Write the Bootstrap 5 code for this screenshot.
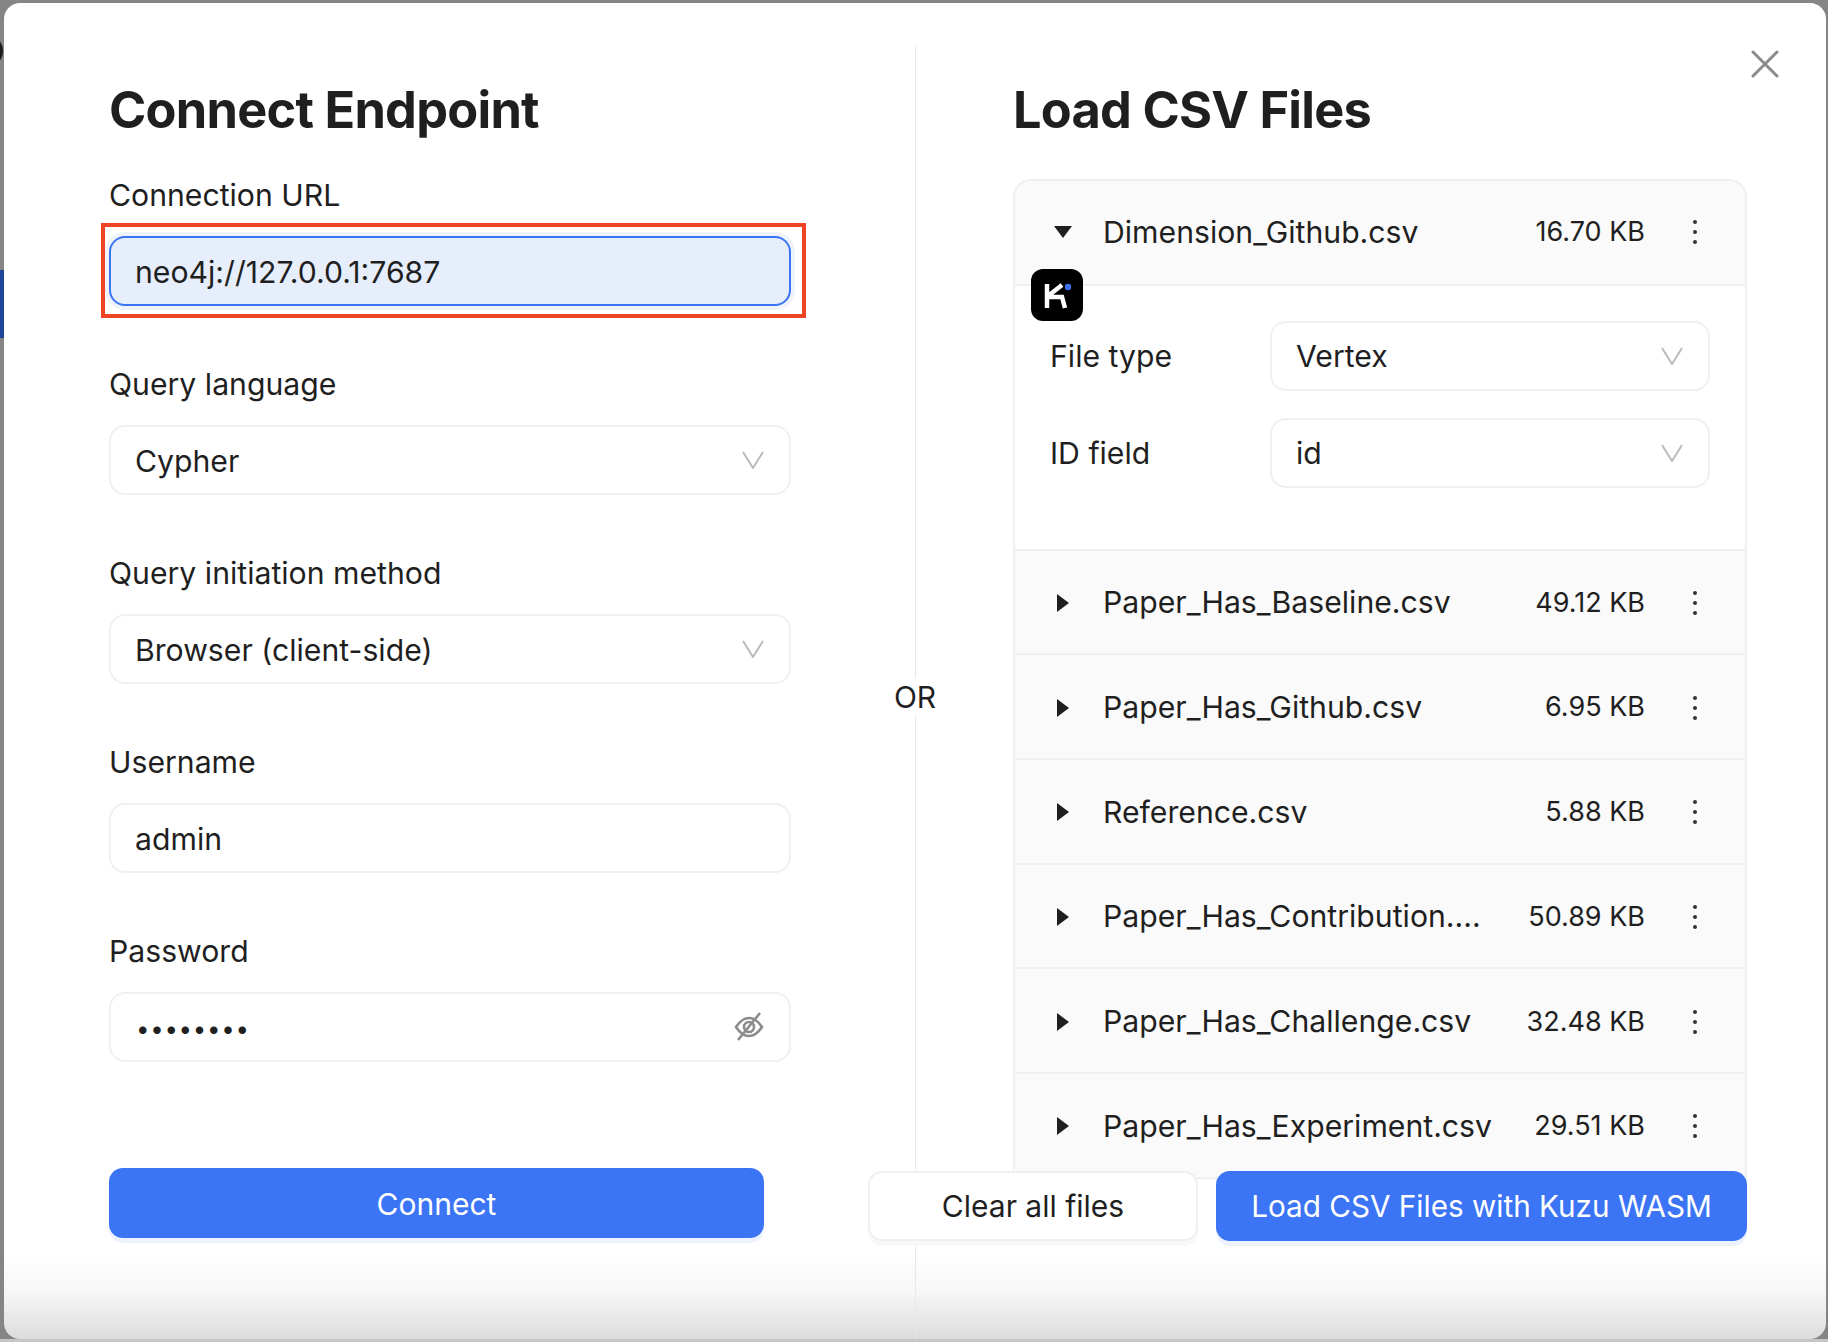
<!doctype html>
<html lang="en">
<head>
<meta charset="utf-8">
<title>Connect Endpoint</title>
<link href="https://cdn.jsdelivr.net/npm/bootstrap@5.3.0/dist/css/bootstrap.min.css" rel="stylesheet">
<style>
html,body{height:100%;}
body{background:#858585;font-family:Inter,"Liberation Sans",sans-serif;color:#1f1f1f;overflow:hidden;}
.stage{height:1342px;padding:3px 2px 3px 4px;position:relative;}
.stage::after{content:"";position:absolute;left:0;right:0;bottom:0;height:3px;background:#c6c6c6;}
.bg-tab{position:absolute;left:0;top:270px;width:4px;height:68px;background:#1f4597;}
.bg-glyph{position:absolute;left:-10px;top:40px;width:13px;height:22px;border:3px solid #1c1c1c;border-radius:50%;}
.dlg{height:1336px;background:linear-gradient(#fff 0,#fff 1250px,#f6f6f6 1290px,#dcdcdc 1336px);border:0;border-radius:16px;position:relative;overflow:hidden;display:flex;flex-direction:row;}
.pane-l{width:911px;flex:none;padding:0 0 0 105px;}
.pane-r{flex:1;padding:0 0 0 97px;min-width:0;}
.rule{width:0;border-left:1px solid #e8e8e8;flex:none;margin-top:42px;position:relative;}
.or-word{position:absolute;left:-31px;width:60px;top:633px;text-align:center;background:#fff;font-size:30px;line-height:38px;}
.ttl{font-size:50.500px;font-weight:700;letter-spacing:-.75px;line-height:60px;margin:77px 0 0;color:#1f1f1f;}
.lbl{font-size:30.200px;line-height:38px;margin:0;color:#1f1f1f;}
.fld{display:block;height:70px;border:2px solid #f0f0f0;border-radius:16px;font-size:30.200px;padding:2px 24px 0;color:#1f1f1f;background-color:#fff;box-shadow:none;}
.fld-group{width:682px;margin-top:36px;}
.fld-group .lbl{margin-bottom:22px;}
.fld-group .fld-sel{padding-top:3px;}
.fld-block{margin-bottom:59px;}
.fld-sel{background-image:url("data:image/svg+xml,%3csvg xmlns='http://www.w3.org/2000/svg' width='22' height='18' viewBox='0 0 22 18'%3e%3cpath d='M1 1l10 16L21 1' fill='none' stroke='%23bbb' stroke-width='2'/%3e%3c/svg%3e");background-position:right 25px center;background-size:22px 18px;background-repeat:no-repeat;padding-right:60px;}
.fld-focus,.fld-focus:focus{background:#e6edfb;border-color:#3b75f5;box-shadow:0 0 0 4px #eef3fc;}
.flag{position:relative;}
.flag::after{content:"";position:absolute;left:-8px;right:-15px;top:-13px;bottom:-12px;border:4px solid #ee4423;pointer-events:none;}
.fld-wrap{position:relative;}
.pw-input{font-size:24px;letter-spacing:.7px;padding:2px 25px 0;}
.eye{position:absolute;right:26px;top:20px;}
.act{height:70px;border-radius:14px;font-size:30px;padding:0;}
.act-main{background:#3b75f5;border:0;color:#fff;box-shadow:0 5px 0 #ecf3fe;}
.act-main:hover{background:#3b75f5;color:#fff;}
.act-ghost{background:#fff;border:2px solid #f0f0f0;color:#1f1f1f;box-shadow:0 5px 0 #f8f8f8;}
.conn-btn{width:655px;margin-top:106px;padding-top:2px;}
.filebox{height:1001px;margin-top:39px;width:734px;border:2px solid #f0f0f0;border-bottom:0;border-radius:18px 18px 0 0;overflow:hidden;background:#fafafa;}
.frow{height:104.700px;flex:none;display:flex;align-items:center;border-bottom:2px solid #f0f0f0;background:#fafafa;padding-left:37px;padding-right:40px;font-size:30.200px;}
.fbody ~ .frow{padding-top:2px;}
.frow .caret{width:22px;flex:none;display:flex;justify-content:center;}
.fname{margin-left:29px;flex:1;white-space:nowrap;min-width:0;}
.fsize{font-size:27px;margin-right:40px;white-space:nowrap;}
.kebab{width:20px;flex:none;display:flex;justify-content:center;}
.fbody{height:265px;background:#fff;border-bottom:2px solid #f0f0f0;padding:35px 35px 0 35px;}
.frm-row{display:flex;align-items:center;height:70px;margin-bottom:27px;}
.frm-row .lbl{width:220px;flex:none;}
.frm-row .fld{flex:1;min-width:0;}
.foot{display:flex;gap:18px;margin-top:-9px;margin-left:-145px;width:879px;position:relative;}
.foot .act-ghost{width:330px;}
.foot .act-main{flex:1;font-size:29.700px;}
.logo{position:absolute;left:1027px;top:266px;}
.close-x{position:absolute;left:1747px;top:47px;background:none;border:0;padding:0;}
</style>
</head>
<body>
<div class="stage">
  <div class="bg-tab"></div>
  <div class="bg-glyph"></div>
  <div class="modal-content dlg">
    <div class="pane-l">
      <h2 class="ttl">Connect Endpoint</h2>
      <div class="fld-group">
        <div class="fld-block">
          <label class="form-label lbl">Connection URL</label>
          <div class="flag"><input class="form-control fld fld-focus" value="neo4j://127.0.0.1:7687"></div>
        </div>
        <div class="fld-block">
          <label class="form-label lbl">Query language</label>
          <select class="form-select fld fld-sel"><option>Cypher</option></select>
        </div>
        <div class="fld-block">
          <label class="form-label lbl">Query initiation method</label>
          <select class="form-select fld fld-sel"><option>Browser (client-side)</option></select>
        </div>
        <div class="fld-block">
          <label class="form-label lbl">Username</label>
          <input class="form-control fld" value="admin">
        </div>
        <div class="fld-block mb-0">
          <label class="form-label lbl">Password</label>
          <div class="fld-wrap">
            <input class="form-control fld pw-input" type="password" value="password">
            <svg class="eye" width="32" height="30" viewBox="0 0 32 30" fill="none" stroke="#8c8c8c" stroke-width="2.600"><path d="M3 15c4-6 8-9 13-9s9 3 13 9c-4 6-8 9-13 9s-9-3-13-9z"/><circle cx="16" cy="15" r="5"/><path d="M27 1L5 28"/></svg>
          </div>
        </div>
      </div>
      <button class="btn act act-main conn-btn d-block">Connect</button>
    </div>
    <div class="rule"><div class="or-word">OR</div></div>
    <div class="pane-r">
      <h2 class="ttl">Load CSV Files</h2>
      <div class="filebox">
        <div class="frow"><span class="caret"><svg width="18" height="12" viewBox="0 0 18 12"><path d="M0 0h18L9 12z" fill="#1f1f1f"/></svg></span><span class="fname">Dimension_Github.csv</span><span class="fsize">16.70 KB</span><span class="kebab"><svg width="6" height="26" viewBox="0 0 6 26" fill="#333"><circle cx="3" cy="3" r="2"/><circle cx="3" cy="13" r="2"/><circle cx="3" cy="23" r="2"/></svg></span></div>
        <div class="fbody">
          <div class="frm-row"><label class="form-label lbl mb-0">File type</label><select class="form-select fld fld-sel"><option>Vertex</option></select></div>
          <div class="frm-row"><label class="form-label lbl mb-0">ID field</label><select class="form-select fld fld-sel"><option>id</option></select></div>
        </div>
        <div class="frow"><span class="caret"><svg width="12" height="18" viewBox="0 0 12 18"><path d="M0 0v18L12 9z" fill="#1f1f1f"/></svg></span><span class="fname">Paper_Has_Baseline.csv</span><span class="fsize">49.12 KB</span><span class="kebab"><svg width="6" height="26" viewBox="0 0 6 26" fill="#333"><circle cx="3" cy="3" r="2"/><circle cx="3" cy="13" r="2"/><circle cx="3" cy="23" r="2"/></svg></span></div>
        <div class="frow"><span class="caret"><svg width="12" height="18" viewBox="0 0 12 18"><path d="M0 0v18L12 9z" fill="#1f1f1f"/></svg></span><span class="fname">Paper_Has_Github.csv</span><span class="fsize">6.95 KB</span><span class="kebab"><svg width="6" height="26" viewBox="0 0 6 26" fill="#333"><circle cx="3" cy="3" r="2"/><circle cx="3" cy="13" r="2"/><circle cx="3" cy="23" r="2"/></svg></span></div>
        <div class="frow"><span class="caret"><svg width="12" height="18" viewBox="0 0 12 18"><path d="M0 0v18L12 9z" fill="#1f1f1f"/></svg></span><span class="fname">Reference.csv</span><span class="fsize">5.88 KB</span><span class="kebab"><svg width="6" height="26" viewBox="0 0 6 26" fill="#333"><circle cx="3" cy="3" r="2"/><circle cx="3" cy="13" r="2"/><circle cx="3" cy="23" r="2"/></svg></span></div>
        <div class="frow"><span class="caret"><svg width="12" height="18" viewBox="0 0 12 18"><path d="M0 0v18L12 9z" fill="#1f1f1f"/></svg></span><span class="fname">Paper_Has_Contribution....</span><span class="fsize">50.89 KB</span><span class="kebab"><svg width="6" height="26" viewBox="0 0 6 26" fill="#333"><circle cx="3" cy="3" r="2"/><circle cx="3" cy="13" r="2"/><circle cx="3" cy="23" r="2"/></svg></span></div>
        <div class="frow"><span class="caret"><svg width="12" height="18" viewBox="0 0 12 18"><path d="M0 0v18L12 9z" fill="#1f1f1f"/></svg></span><span class="fname">Paper_Has_Challenge.csv</span><span class="fsize">32.48 KB</span><span class="kebab"><svg width="6" height="26" viewBox="0 0 6 26" fill="#333"><circle cx="3" cy="3" r="2"/><circle cx="3" cy="13" r="2"/><circle cx="3" cy="23" r="2"/></svg></span></div>
        <div class="frow"><span class="caret"><svg width="12" height="18" viewBox="0 0 12 18"><path d="M0 0v18L12 9z" fill="#1f1f1f"/></svg></span><span class="fname">Paper_Has_Experiment.csv</span><span class="fsize">29.51 KB</span><span class="kebab"><svg width="6" height="26" viewBox="0 0 6 26" fill="#333"><circle cx="3" cy="3" r="2"/><circle cx="3" cy="13" r="2"/><circle cx="3" cy="23" r="2"/></svg></span></div>
      </div>
      <div class="foot">
        <button class="btn act act-ghost">Clear all files</button>
        <button class="btn act act-main">Load CSV Files with Kuzu WASM</button>
      </div>
    </div>
    <svg class="logo" width="52" height="52" viewBox="0 0 52 52"><rect width="52" height="52" rx="12" fill="#000"/><path d="M16 15v24M16 28h15l3 11M17 27L31 16" fill="none" stroke="#fff" stroke-width="4.500"/><circle cx="37" cy="18" r="3.200" fill="#3b6ff0"/></svg>
    <button class="close-x" aria-label="Close"><svg width="28" height="28" viewBox="0 0 28 28" stroke="#8a8a8a" stroke-width="3" stroke-linecap="round"><path d="M2 2l24 24M26 2L2 26"/></svg></button>
  </div>
</div>
<script src="https://cdn.jsdelivr.net/npm/bootstrap@5.3.0/dist/js/bootstrap.bundle.min.js"></script>
</body>
</html>
